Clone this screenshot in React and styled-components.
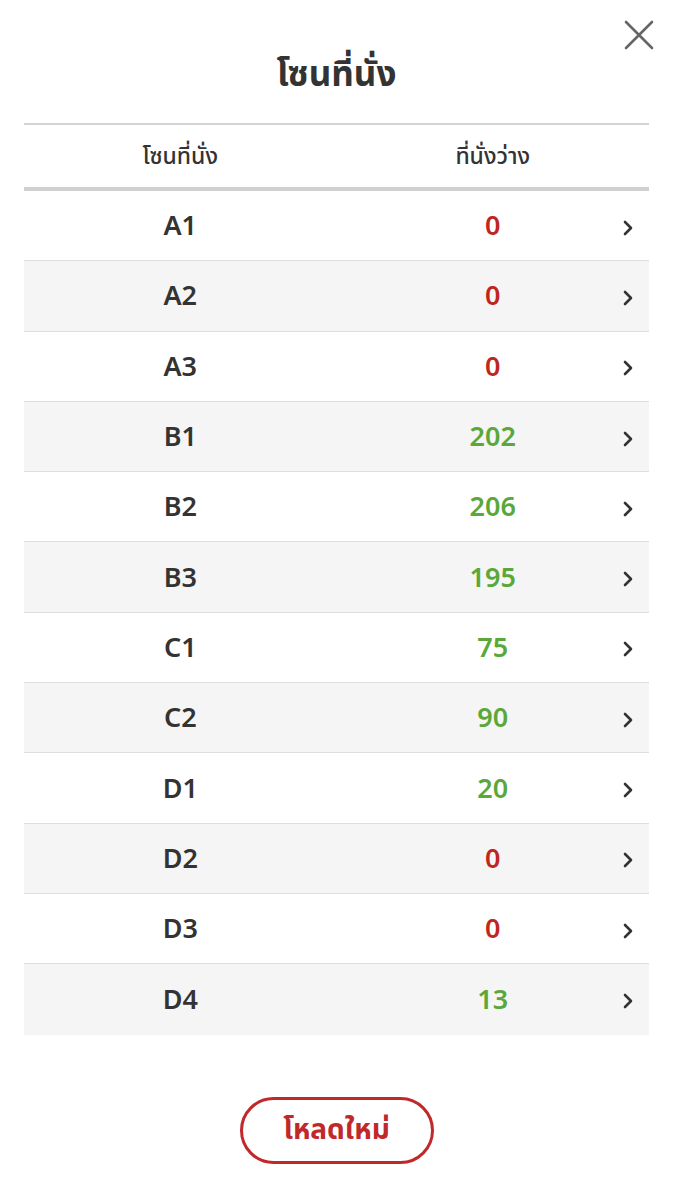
import styled, { createGlobalStyle } from "styled-components";

const zones = [
  { name: "A1", free: 0 },
  { name: "A2", free: 0 },
  { name: "A3", free: 0 },
  { name: "B1", free: 202 },
  { name: "B2", free: 206 },
  { name: "B3", free: 195 },
  { name: "C1", free: 75 },
  { name: "C2", free: 90 },
  { name: "D1", free: 20 },
  { name: "D2", free: 0 },
  { name: "D3", free: 0 },
  { name: "D4", free: 13 },
];

const GlobalStyle = createGlobalStyle`
  body {
    margin: 0;
    background: #fff;
    font-family: "Noto Sans", "Noto Sans Thai", "DejaVu Sans", sans-serif;
    color: #333;
  }
`;

const App = () => {
  return (
    <Page>
      <GlobalStyle />
      <CloseButton aria-label="close">
        <svg width="30" height="30" viewBox="0 0 30 30">
          <path d="M2 2 L28 28 M28 2 L2 28" stroke="#666" strokeWidth="2.6" strokeLinecap="round" />
        </svg>
      </CloseButton>

      <Title>โซนที่นั่ง</Title>

      <Table>
        <HeaderRow>
          <Cell>โซนที่นั่ง</Cell>
          <Cell>ที่นั่งว่าง</Cell>
        </HeaderRow>

        {zones.map((z, i) => (
          <Row key={z.name} $alt={i % 2 === 1}>
            <ZoneCell>{z.name}</ZoneCell>
            <CountCell $empty={z.free === 0}>{z.free}</CountCell>
            <Chevron width="14" height="18" viewBox="0 0 14 18">
              <path d="M4 3 L10 9 L4 15" fill="none" stroke="#333" strokeWidth="2.6" strokeLinecap="round" strokeLinejoin="round" />
            </Chevron>
          </Row>
        ))}
      </Table>

      <Footer>
        <ReloadButton>โหลดใหม่</ReloadButton>
      </Footer>
    </Page>
  );
};

const Page = styled.div`
  position: relative;
  width: 674px;
  min-height: 1200px;
  padding: 0 25px 0 24px;
  box-sizing: border-box;
`;

const CloseButton = styled.button`
  position: absolute;
  top: 20px;
  right: 20px;
  border: none;
  background: none;
  padding: 0;
  cursor: pointer;
`;

const Title = styled.h1`
  margin: 0;
  height: 123px;
  display: flex;
  align-items: center;
  justify-content: center;
  padding-top: 28px;
  box-sizing: border-box;
  font-size: 35px;
  font-weight: 700;
  color: #333;
`;

const Table = styled.div`
  border-top: 2px solid #d4d4d4;
`;

const HeaderRow = styled.div`
  display: grid;
  grid-template-columns: 1fr 1fr;
  align-items: center;
  height: 62px;
  border-bottom: 4px solid #d0d0d0;
  font-size: 23px;
  font-weight: 500;
  color: #333;
`;

const Cell = styled.div`
  text-align: center;
`;

const Row = styled.div`
  position: relative;
  display: grid;
  grid-template-columns: 1fr 1fr;
  align-items: center;
  height: 70.3px;
  padding-bottom: 2px;
  box-sizing: border-box;
  background: ${(p) => (p.$alt ? "#f5f5f5" : "#fff")};
  border-bottom: 1px solid #dedede;
  font-size: 27px;
  font-weight: 600;

  &:last-child {
    border-bottom: none;
  }
`;

const ZoneCell = styled(Cell)`
  color: #333;
`;

const CountCell = styled(Cell)`
  color: ${(p) => (p.$empty ? "#c0251f" : "#5aa83a")};
`;

const Chevron = styled.svg`
  position: absolute;
  right: 14px;
  top: 50%;
  margin-top: -7px;
`;

const Footer = styled.div`
  display: flex;
  justify-content: center;
  padding-top: 62px;
`;

const ReloadButton = styled.button`
  width: 194px;
  height: 67px;
  border: 3px solid #c0282a;
  border-radius: 34px;
  background: #fff;
  color: #c0282a;
  font-family: inherit;
  font-size: 28px;
  font-weight: 700;
  cursor: pointer;
`;

export default App;
